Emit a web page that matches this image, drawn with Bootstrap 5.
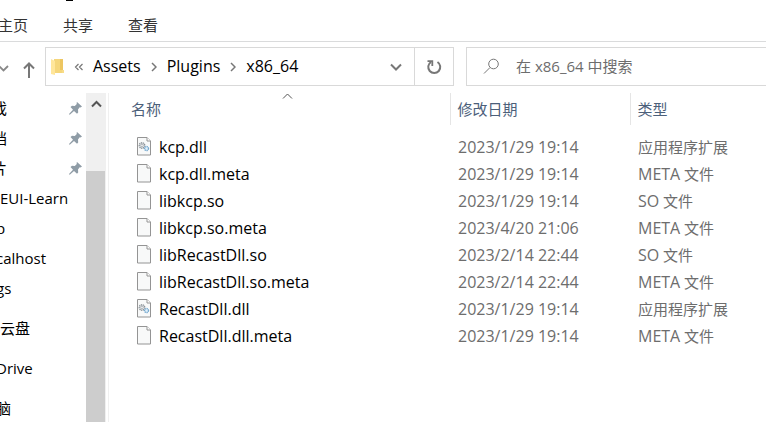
<!DOCTYPE html>
<html lang="zh-CN">
<head>
<meta charset="utf-8">
<meta name="viewport" content="width=device-width, initial-scale=1">
<title>x86_64</title>
<link href="https://cdn.jsdelivr.net/npm/bootstrap@5.3.0/dist/css/bootstrap.min.css" rel="stylesheet">
<style>
body{font:15px/20px "Open Sans","Noto Sans CJK SC",sans-serif;color:#000;background:#fff}
a{color:inherit;text-decoration:none}
svg{display:block;flex:none}
.en{font-size:16px}
.title-strip{height:10px}
.title-mark{width:7px;height:1px;margin-left:66px;background:#000}
.ribbon{height:32px;gap:35px;border-bottom:1px solid #dadbdc;color:#333;padding-bottom:2px}
.ribbon a:first-child{margin-left:-2px}
.toolbar{height:51px;padding-top:5px}
.plain{border:0;background:none;padding:0;color:#777}
.nav-tools{width:45px;gap:14px}
.address{width:409px;height:39px;border:1px solid #d9d9d9}
.crumbs{gap:10px;padding-left:5px;font-size:16px}
.crumbs a{padding-bottom:2px}
.reload{width:39px;border-left:1px solid #d9d9d9}
.search{height:39px;border:1px solid #d9d9d9;border-right:0;margin-left:12px;padding-left:16px;gap:16px}
.search input{border:0;outline:0;padding:0 0 2px;color:#6d6d6d;min-width:0}
.search input::placeholder{color:#6d6d6d;opacity:1}
.sidebar{width:86px}
.sidebar li{height:30px}
.sidebar .drive{height:40px}
.sidebar .first-drive{margin-top:5px}
.cut-s{margin-left:-4px}
.cut-l{margin-left:-8px}
.scroller{width:20px;background:#f0f0f0}
.scroller .thumb{background:#cdcdcd;margin-right:1px}
.scroller button{height:78px;padding-top:7px}
.pane{border-left:1px solid #f0f0f0;margin-left:2px;padding-left:22px}
.files{table-layout:fixed;width:100%}
.files th{height:32px;font-weight:400;color:#4c607a;padding:0}
.files th+th{border-left:1px solid #e5e5e5;padding-left:7px}
.files td{height:27px;padding:0;color:#6d6d6d;white-space:nowrap}
.files td+td{padding-left:8px}
.files td:first-child{color:#000;padding-left:5px;font-size:16px}
.files td:first-child a{gap:7px}
.files td:nth-child(2){font-size:16px}
.files .gap td{height:8px}
.c-name{width:319px}.c-date{width:180px}
.sort-mark{left:151px;top:-7px}
</style>
<script src="https://cdn.jsdelivr.net/npm/bootstrap@5.3.0/dist/js/bootstrap.bundle.min.js"></script>
</head>
<body class="vh-100 overflow-hidden d-flex flex-column">
<svg width="0" height="0" class="position-absolute" aria-hidden="true">
<symbol id="doc" viewBox="0 0 16 19"><path d="M1.500 .5h9.500l3.500 3.500v14h-13z" fill="#f8f9f9" stroke="#949494"/><path d="M11 .5v3.500h3.500" fill="#fff" stroke="#949494"/></symbol>
<symbol id="dll" viewBox="0 0 16 19"><use href="#doc"/><circle cx="6" cy="8.500" r="2.600" fill="none" stroke="#8b9298" stroke-width="1.600" stroke-dasharray="1.200 .6"/><circle cx="6" cy="8.500" r="1.200" fill="none" stroke="#8b9298" stroke-width=".6"/><circle cx="10.500" cy="11.500" r="2" fill="#e2f1fb" stroke="#76a9cf" stroke-width="1.400" stroke-dasharray="1.200 .5"/></symbol>
<symbol id="pin" viewBox="0 0 13 13"><path d="M8 0l5 4.500-1.500 1-.8-.2L9 7.500l.2 3L8 11.700 5 9 1 12.500H0V12l4-4.200L1.500 5 3 3.800l2.800.2 2-2-.2-1.200z" fill="#8f9ca6"/></symbol>
<symbol id="next" viewBox="0 0 6 10"><path d="M1 1l4 4-4 4" fill="none" stroke="#777" stroke-width="1.500"/></symbol>
<symbol id="down" viewBox="0 0 12 8"><path d="M1 1.500l5 5 5-5" fill="none" stroke="#777" stroke-width="2"/></symbol>
</svg>
<header>
<div class="title-strip"><div class="title-mark"></div></div>
<nav class="ribbon d-flex align-items-center"><a href="#">主页</a><a href="#">共享</a><a href="#">查看</a></nav>
<div class="toolbar d-flex">
<div class="nav-tools d-flex align-items-center flex-shrink-0">
<button class="plain" aria-label="最近位置"><svg width="9" height="12"><path d="M-1 2l4.500 4.500L8 2" fill="none" stroke="#888" stroke-width="1.800"/></svg></button>
<button class="plain" aria-label="上移"><svg width="12" height="18"><path d="M6 17V2M1 7.500l5-5 5 5" fill="none" stroke="#777" stroke-width="2"/></svg></button>
</div>
<div class="address d-flex flex-shrink-0">
<nav class="crumbs d-flex align-items-center flex-grow-1" aria-label="路径">
<svg width="13" height="18"><path d="M3 1h9v14H3z" fill="#f5d67b"/><path d="M9 1h3v11H9z" fill="#edc661"/><path d="M0 1l4 2v14l-4-1z" fill="#ffe69b"/><path d="M11 12h2v3h-2z" fill="#f8dc88"/></svg>
<svg width="9" height="8"><path d="M4.500 1l-3 3 3 3M8.500 1l-3 3 3 3" fill="none" stroke="#777" stroke-width="1.200"/></svg>
<a href="#">Assets</a><svg width="6" height="10"><use href="#next"/></svg><a href="#">Plugins</a><svg width="6" height="10"><use href="#next"/></svg><a href="#">x86_64</a>
<button class="plain ms-auto me-2 pe-1" aria-label="历史"><svg width="12" height="8"><use href="#down"/></svg></button>
</nav>
<button class="plain reload d-flex align-items-center justify-content-center" aria-label="刷新"><svg width="16" height="16"><path d="M11.500 3A6 6 0 1 1 5 3" fill="none" stroke="#777" stroke-width="2"/><path d="M1.500 2.200h4.800V7" fill="none" stroke="#777" stroke-width="1.800"/></svg></button>
</div>
<label class="search d-flex align-items-center flex-grow-1"><svg width="17" height="17"><circle cx="10.500" cy="6" r="4.800" fill="none" stroke="#777"/><path d="M7 9.500L1 15.500" stroke="#777"/></svg><input class="flex-grow-1" type="text" placeholder="在 x86_64 中搜索" aria-label="搜索"></label>
</div>
</header>
<main class="d-flex flex-grow-1 overflow-hidden">
<ul class="sidebar list-unstyled mb-0 flex-shrink-0 text-nowrap overflow-hidden">
<li class="d-flex align-items-center"><a href="#" class="cut-l">戏</a><svg class="ms-auto me-1" width="13" height="13"><use href="#pin"/></svg></li>
<li class="d-flex align-items-center"><a href="#" class="cut-l">档</a><svg class="ms-auto me-1" width="13" height="13"><use href="#pin"/></svg></li>
<li class="d-flex align-items-center"><a href="#" class="cut-l">片</a><svg class="ms-auto me-1" width="13" height="13"><use href="#pin"/></svg></li>
<li class="d-flex align-items-center"><a href="#">EUI-Learn</a></li>
<li class="d-flex align-items-center"><a href="#" class="cut-s">p</a></li>
<li class="d-flex align-items-center"><a href="#" class="cut-s">calhost</a></li>
<li class="d-flex align-items-center"><a href="#" class="cut-s">gs</a></li>
<li class="drive first-drive d-flex align-items-center"><a href="#">云盘</a></li>
<li class="drive d-flex align-items-center"><a href="#" class="cut-s">Drive</a></li>
<li class="drive d-flex align-items-center"><a href="#" class="cut-s">脑</a></li>
</ul>
<div class="scroller d-flex flex-column flex-shrink-0"><button class="plain d-flex justify-content-center" aria-label="向上滚动"><svg width="11" height="8"><path d="M1 6.500L5.500 2 10 6.500" fill="none" stroke="#555" stroke-width="2"/></svg></button><div class="thumb flex-grow-1"></div></div>
<section class="pane flex-grow-1">
<table class="files">
<colgroup><col class="c-name"><col class="c-date"><col></colgroup>
<thead><tr><th class="position-relative">名称<svg class="sort-mark position-absolute" width="11" height="14"><path d="M1 12.500L5.500 8 10 12.500" fill="none" stroke="#555"/></svg></th><th>修改日期</th><th>类型</th></tr></thead>
<tbody>
<tr class="gap" aria-hidden="true"><td colspan="3"></td></tr>
<tr><td><a href="#" class="d-flex align-items-center"><svg width="16" height="19"><use href="#dll"/></svg>kcp.dll</a></td><td>2023/1/29 19:14</td><td>应用程序扩展</td></tr>
<tr><td><a href="#" class="d-flex align-items-center"><svg width="16" height="19"><use href="#doc"/></svg>kcp.dll.meta</a></td><td>2023/1/29 19:14</td><td><span class="en">META</span> 文件</td></tr>
<tr><td><a href="#" class="d-flex align-items-center"><svg width="16" height="19"><use href="#doc"/></svg>libkcp.so</a></td><td>2023/1/29 19:14</td><td><span class="en">SO</span> 文件</td></tr>
<tr><td><a href="#" class="d-flex align-items-center"><svg width="16" height="19"><use href="#doc"/></svg>libkcp.so.meta</a></td><td>2023/4/20 21:06</td><td><span class="en">META</span> 文件</td></tr>
<tr><td><a href="#" class="d-flex align-items-center"><svg width="16" height="19"><use href="#doc"/></svg>libRecastDll.so</a></td><td>2023/2/14 22:44</td><td><span class="en">SO</span> 文件</td></tr>
<tr><td><a href="#" class="d-flex align-items-center"><svg width="16" height="19"><use href="#doc"/></svg>libRecastDll.so.meta</a></td><td>2023/2/14 22:44</td><td><span class="en">META</span> 文件</td></tr>
<tr><td><a href="#" class="d-flex align-items-center"><svg width="16" height="19"><use href="#dll"/></svg>RecastDll.dll</a></td><td>2023/1/29 19:14</td><td>应用程序扩展</td></tr>
<tr><td><a href="#" class="d-flex align-items-center"><svg width="16" height="19"><use href="#doc"/></svg>RecastDll.dll.meta</a></td><td>2023/1/29 19:14</td><td><span class="en">META</span> 文件</td></tr>
</tbody>
</table>
</section>
</main>
</body>
</html>
